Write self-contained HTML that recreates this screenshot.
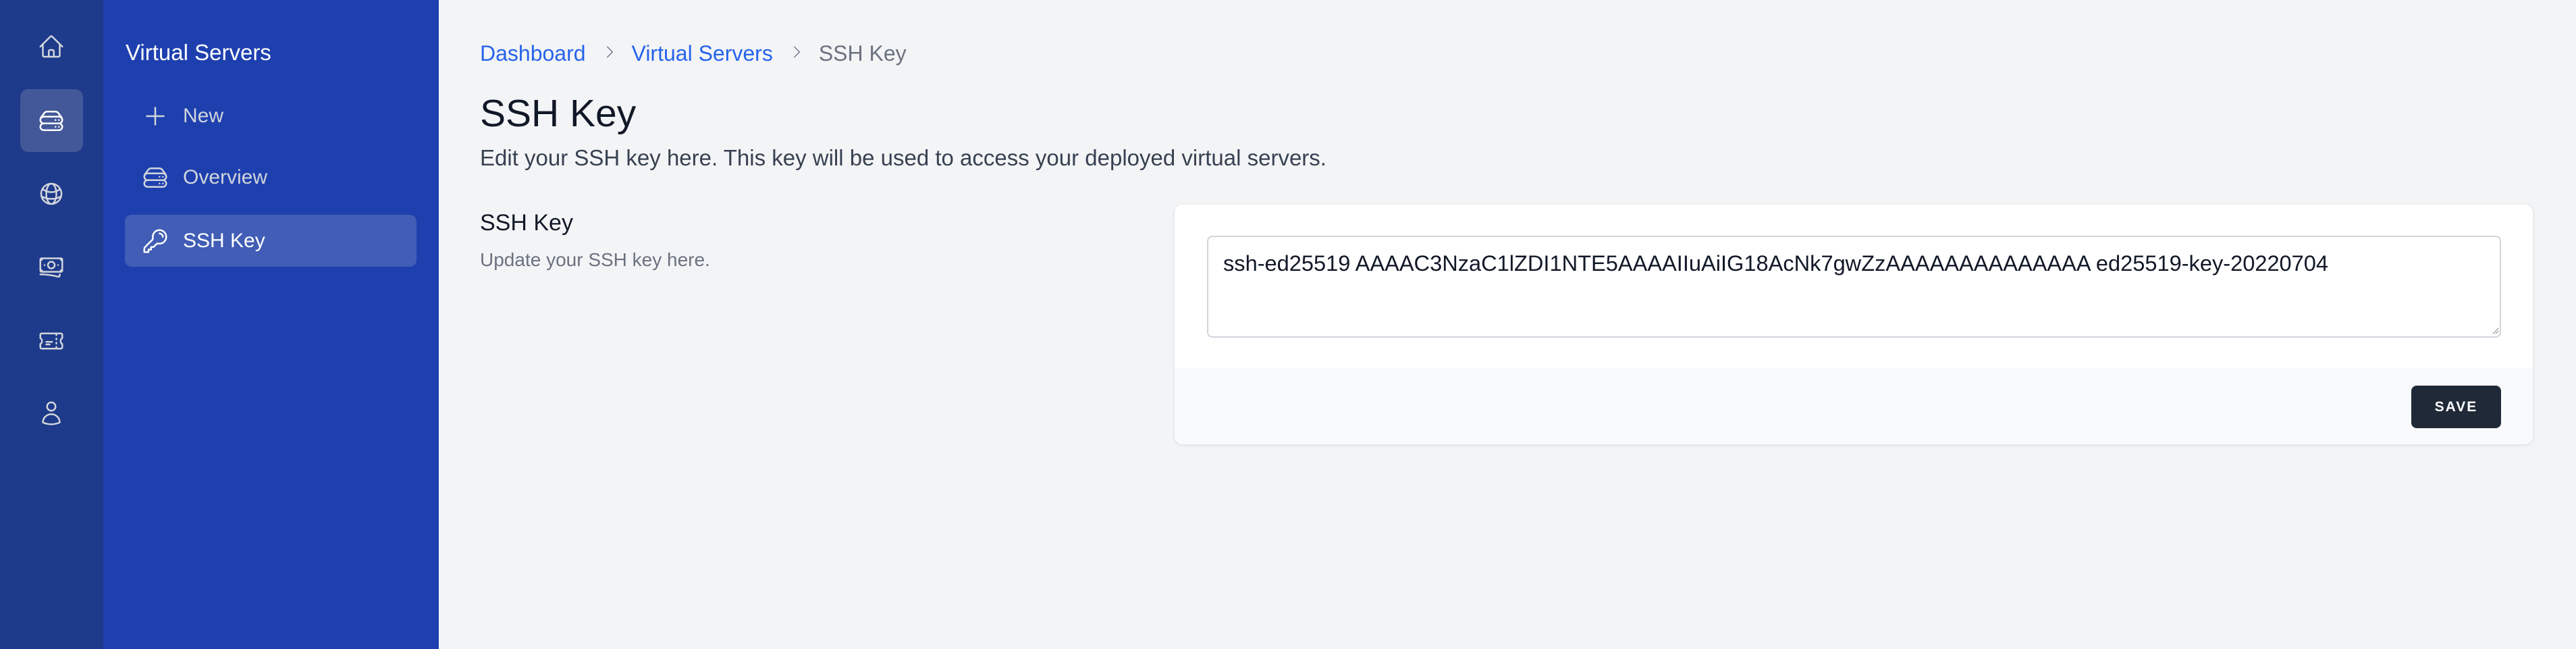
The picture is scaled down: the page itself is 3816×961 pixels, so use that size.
<!DOCTYPE html>
<html><head><meta charset="utf-8"><style>
*{margin:0;padding:0;box-sizing:border-box}
body{width:3816px;height:961px;overflow:hidden;background:#f3f4f6;font-family:"Liberation Sans",sans-serif;position:relative}
.rail{position:absolute;left:0;top:0;width:153px;height:961px;background:#1e3a8a}
.side{position:absolute;left:153px;top:0;width:497px;height:961px;background:#1e40af}
svg{position:absolute;fill:none;stroke:#d1d5db;stroke-width:1.5;stroke-linecap:round;stroke-linejoin:round}
.ab{position:absolute}
</style></head><body>
<div class="rail"></div>
<div class="ab" style="left:30px;top:132px;width:93px;height:93px;border-radius:12px;background:#435898"></div>
<svg viewBox="0 0 24 24" style="left:56px;top:49px;width:40px;height:40px"><path d="m2.25 12 8.954-8.955c.44-.439 1.152-.439 1.591 0L21.75 12M4.5 9.75v10.125c0 .621.504 1.125 1.125 1.125H9.75v-4.875c0-.621.504-1.125 1.125-1.125h2.25c.621 0 1.125.504 1.125 1.125V21h4.125c.621 0 1.125-.504 1.125-1.125V9.75M8.25 21h8.25"/></svg>
<svg viewBox="0 0 24 24" style="left:56px;top:159px;width:40px;height:40px;stroke:#fff"><path d="M5.25 14.25h13.5m-13.5 0a3 3 0 0 1-3-3m3 3a3 3 0 1 0 0 6h13.5a3 3 0 1 0 0-6m-16.5-3a3 3 0 0 1 3-3h13.5a3 3 0 0 1 3 3m-19.5 0a4.5 4.5 0 0 1 .9-2.7L5.737 5.1a3.375 3.375 0 0 1 2.7-1.35h7.126c1.062 0 2.062.5 2.7 1.35l2.587 3.45a4.5 4.5 0 0 1 .9 2.7m0 0a3 3 0 0 1-3 3m0 3h.008v.008h-.008v-.008Zm0-6h.008v.008h-.008v-.008Zm-3 6h.008v.008h-.008v-.008Zm0-6h.008v.008h-.008v-.008Z"/></svg>
<svg viewBox="0 0 24 24" style="left:56px;top:267px;width:40px;height:40px"><path d="M12 21a9.004 9.004 0 0 0 8.716-6.747M12 21a9.004 9.004 0 0 1-8.716-6.747M12 21c2.485 0 4.5-4.03 4.5-9S14.485 3 12 3m0 18c-2.485 0-4.5-4.030-4.5-9S9.515 3 12 3m0 0a8.997 8.997 0 0 1 7.843 4.582M12 3a8.997 8.997 0 0 0-7.843 4.582m15.686 0A11.953 11.953 0 0 1 12 10.5c-2.998 0-5.74-1.100-7.843-2.918m15.686 0A8.959 8.959 0 0 1 21 12c0 .778-.099 1.533-.284 2.253m0 0A17.919 17.919 0 0 1 12 16.5c-3.162 0-6.133-.815-8.716-2.247m0 0A9.015 9.015 0 0 1 3 12c0-1.605.42-3.113 1.157-4.418"/></svg>
<svg viewBox="0 0 24 24" style="left:56px;top:375px;width:40px;height:40px"><path d="M2.25 18.75a60.07 60.07 0 0 1 15.797 2.101c.727.198 1.453-.342 1.453-1.096V18.75M3.75 4.5v.75A.75.75 0 0 1 3 6h-.75m0 0v-.375c0-.621.504-1.125 1.125-1.125H20.25M2.25 6v9m18-10.5v.75c0 .414.336.75.75.75h.75m-1.5-1.5h.375c.621 0 1.125.504 1.125 1.125v9.750c0 .621-.504 1.125-1.125 1.125h-.375m1.5-1.5H21a.75.75 0 0 0-.75.75v.75m0 0H3.75m0 0h-.375a1.125 1.125 0 0 1-1.125-1.125V15m1.5 1.5v-.75A.75.75 0 0 0 3 15h-.75M15 10.5a3 3 0 1 1-6 0 3 3 0 0 1 6 0Zm3 0h.008v.008H18V10.5Zm-12 0h.008v.008H6V10.5Z"/></svg>
<svg viewBox="0 0 24 24" style="left:56px;top:485px;width:40px;height:40px"><path d="M16.5 6v.75m0 3v.75m0 3v.75m0 3V18m-9-5.25h5.25M7.5 15h3M3.375 5.25c-.621 0-1.125.504-1.125 1.125v3.026a2.999 2.999 0 0 1 0 5.198v3.026c0 .621.504 1.125 1.125 1.125h17.25c.621 0 1.125-.504 1.125-1.125v-3.026a2.999 2.999 0 0 1 0-5.198V6.375c0-.621-.504-1.125-1.125-1.125H3.375Z"/></svg>
<svg viewBox="0 0 24 24" style="left:56px;top:592px;width:40px;height:40px"><path d="M15.75 6a3.75 3.75 0 1 1-7.5 0 3.75 3.75 0 0 1 7.5 0ZM4.501 20.118a7.5 7.5 0 0 1 14.998 0A17.933 17.933 0 0 1 12 21.750c-2.676 0-5.216-.584-7.499-1.632Z"/></svg>

<div class="side"></div>
<div class="ab" style="left:186px;top:60px;font-size:33px;color:#fff;line-height:36px">Virtual Servers</div>
<svg viewBox="0 0 24 24" style="left:210px;top:152px;width:40px;height:40px"><path d="M12 4.5v15m7.5-7.5h-15"/></svg>
<div class="ab" style="left:271px;top:154px;font-size:30px;color:#d1d5db;line-height:36px">New</div>
<svg viewBox="0 0 24 24" style="left:210px;top:243px;width:40px;height:40px"><path d="M5.25 14.25h13.5m-13.5 0a3 3 0 0 1-3-3m3 3a3 3 0 1 0 0 6h13.5a3 3 0 1 0 0-6m-16.5-3a3 3 0 0 1 3-3h13.5a3 3 0 0 1 3 3m-19.5 0a4.5 4.5 0 0 1 .9-2.7L5.737 5.1a3.375 3.375 0 0 1 2.7-1.35h7.126c1.062 0 2.062.5 2.7 1.35l2.587 3.45a4.5 4.5 0 0 1 .9 2.7m0 0a3 3 0 0 1-3 3m0 3h.008v.008h-.008v-.008Zm0-6h.008v.008h-.008v-.008Zm-3 6h.008v.008h-.008v-.008Zm0-6h.008v.008h-.008v-.008Z"/></svg>
<div class="ab" style="left:271px;top:245px;font-size:30px;color:#d1d5db;line-height:36px">Overview</div>
<div class="ab" style="left:185px;top:318px;width:432px;height:77px;border-radius:10px;background:#415db5"></div>
<svg viewBox="0 0 24 24" style="left:210px;top:337px;width:40px;height:40px;stroke:#fff"><path d="M15.75 5.25a3 3 0 0 1 3 3m3 0a6 6 0 0 1-7.029 5.912c-.563-.097-1.159.026-1.563.43L10.5 17.25H8.25v2.25H6v2.250H2.25v-2.818c0-.597.237-1.170.659-1.591l6.499-6.499c.404-.404.527-1 .43-1.563A6 6 0 1 1 21.75 8.25Z"/></svg>
<div class="ab" style="left:271px;top:339px;font-size:30px;color:#fff;line-height:36px">SSH Key</div>

<div class="ab" style="left:711px;top:60px;font-size:32px;line-height:36px;color:#6b7280;white-space:nowrap"><span style="color:#2563eb">Dashboard</span><span style="display:inline-block;width:68px;height:30px;position:relative"><svg viewBox="0 0 24 24" style="left:22px;top:4px;width:26px;height:26px;stroke:#6b7280;stroke-width:1.3"><path d="m9 5 7 7-7 7"/></svg></span><span style="color:#2563eb">Virtual Servers</span><span style="display:inline-block;width:68px;height:30px;position:relative"><svg viewBox="0 0 24 24" style="left:22px;top:4px;width:26px;height:26px;stroke:#6b7280;stroke-width:1.3"><path d="m9 5 7 7-7 7"/></svg></span>SSH Key</div>
<div class="ab" style="left:711px;top:134px;font-size:57px;line-height:68px;color:#111827">SSH Key</div>
<div class="ab" style="left:711px;top:215px;font-size:33px;line-height:38px;color:#374151;white-space:nowrap">Edit your SSH key here. This key will be used to access your deployed virtual servers.</div>
<div class="ab" style="left:711px;top:310px;font-size:34px;line-height:40px;color:#111827">SSH Key</div>
<div class="ab" style="left:711px;top:368px;font-size:28px;line-height:34px;color:#6b7280">Update your SSH key here.</div>

<div class="ab" style="left:1740px;top:303px;width:2012px;height:355px;border-radius:12px;background:#fff;box-shadow:0 1px 4px rgba(0,0,0,.12);overflow:hidden">
 <div class="ab" style="left:0;top:242px;width:100%;height:113px;background:#f9fafb"></div>
 <div class="ab" style="left:48px;top:46px;width:1917px;height:151px;border:2px solid #d1d5db;border-radius:8px;background:#fff"></div>
 <div class="ab" style="left:72px;top:68px;font-size:32.6px;line-height:38px;color:#111827;white-space:nowrap">ssh-ed25519 AAAAC3NzaC1lZDI1NTE5AAAAIIuAiIG18AcNk7gwZzAAAAAAAAAAAAAA ed25519-key-20220704</div>
 <svg viewBox="0 0 12 12" style="left:1950px;top:180px;width:12px;height:12px;stroke:#888;stroke-width:1"><path d="M11 3 3 11M11 7 7 11"/></svg>
 <div class="ab" style="left:1832px;top:268px;width:133px;height:63px;border-radius:8px;background:#1f2937;color:#fff;font-size:21px;font-weight:bold;letter-spacing:2px;text-align:center;line-height:63px">SAVE</div>
</div>
</body></html>
